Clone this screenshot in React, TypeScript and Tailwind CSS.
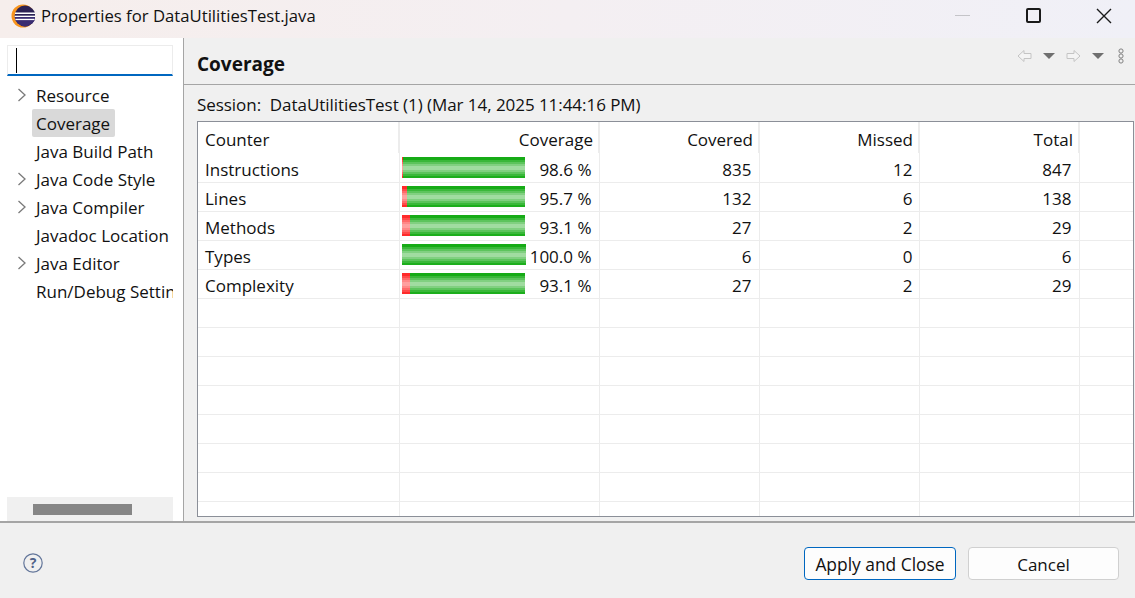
const rows = [
  { name: "Instructions", pct: "98.6 %", red: 1, covered: "835", missed: "12", total: "847" },
  { name: "Lines", pct: "95.7 %", red: 5, covered: "132", missed: "6", total: "138" },
  { name: "Methods", pct: "93.1 %", red: 8, covered: "27", missed: "2", total: "29" },
  { name: "Types", pct: "100.0 %", red: 0, covered: "6", missed: "0", total: "6" },
  { name: "Complexity", pct: "93.1 %", red: 8, covered: "27", missed: "2", total: "29" },
];

const tree = [
  { label: "Resource", arrow: true },
  { label: "Coverage", arrow: false, selected: true },
  { label: "Java Build Path", arrow: false },
  { label: "Java Code Style", arrow: true },
  { label: "Java Compiler", arrow: true },
  { label: "Javadoc Location", arrow: false },
  { label: "Java Editor", arrow: true },
  { label: "Run/Debug Settings", arrow: false },
];

function EclipseLogo() {
  return (
    <svg width="24" height="24" viewBox="0 0 24 24" className="shrink-0">
      <circle cx="12" cy="12" r="11.5" fill="#f7941e" />
      <circle cx="14" cy="12" r="10.4" fill="#2c2255" />
      <path d="M3.6 12 A10.4 10.4 0 0 0 24.4 12 Z" fill="#3a2d72" />
      <rect x="4" y="8.5" width="20" height="1.5" fill="#fff" />
      <rect x="3.6" y="11.7" width="20.8" height="1.3" fill="#fff" />
      <rect x="4.4" y="14.8" width="19.2" height="1.3" fill="#fff" />
    </svg>
  );
}

function NavArrow({ flip }: { flip?: boolean }) {
  return (
    <svg width="15" height="14" viewBox="0 0 15 14" className={flip ? "-scale-x-100" : ""}>
      <path d="M1 7 L7 1.5 V4.5 H14 V9.5 H7 V12.5 Z" fill="#f4f4f4" stroke="#c4c4c4" strokeWidth="1" />
    </svg>
  );
}

function Caret() {
  return <div className="w-0 h-0 border-x-[6px] border-x-transparent border-t-[6px] border-t-[#6f6f6f]" />;
}

function TreeArrow() {
  return (
    <svg width="10" height="14" viewBox="0 0 10 14">
      <path d="M1.5 1 L8 7 L1.5 13" fill="none" stroke="#7a7a7a" strokeWidth="1.3" />
    </svg>
  );
}

function Bar({ red, full }: { red: number; full: boolean }) {
  return (
    <div className={`flex h-[21px] ${full ? "w-[124px]" : "w-[123px]"}`}>
      {red > 0 && (
        <div
          className="h-full bg-[linear-gradient(#ff2a2a_0%,#ff2a2a_14%,#ff4a4a_14%,#ff4a4a_24%,#ff6a6a_24%,#ff6a6a_34%,#ff8888_34%,#ff8888_44%,#ffa0a0_44%,#ffa0a0_62%,#ff8888_62%,#ff8888_72%,#ff6a6a_72%,#ff6a6a_82%,#ff4a4a_82%,#ff4a4a_90%,#ff2a2a_90%)]"
          style={{ width: red }}
        />
      )}
      <div className="h-full flex-1 bg-[linear-gradient(#16ab16_0%,#16ab16_14%,#3ab83a_14%,#3ab83a_24%,#5cc45c_24%,#5cc45c_34%,#80d080_34%,#80d080_44%,#a0dca0_44%,#a0dca0_62%,#80d080_62%,#80d080_72%,#5cc45c_72%,#5cc45c_82%,#3ab83a_82%,#3ab83a_90%,#1cae1c_90%)]" />
    </div>
  );
}

export default function App() {
  return (
    <div className="w-[1135px] h-[598px] flex flex-col overflow-hidden bg-[#f0f0f0] text-[17px] text-[#111] font-['Open_Sans','Noto_Sans',sans-serif]">
      <div className="h-[38px] shrink-0 flex items-center pl-[11px] pb-[7px] bg-[linear-gradient(90deg,#f6eeec,#f4eff2_50%,#f0f0f7)]">
        <EclipseLogo />
        <span className="ml-[6px] text-[16.7px]">Properties for DataUtilitiesTest.java</span>
        <div className="ml-auto flex items-center">
          <div className="w-[15px] h-px bg-[#c4c4c8] mr-[56px]" />
          <div className="w-[15px] h-[15px] border-2 border-[#1a1a1a] rounded-[2px] mr-[55px]" />
          <svg width="16" height="16" viewBox="0 0 16 16" className="mr-[23px]">
            <path d="M1 1 L15 15 M15 1 L1 15" stroke="#1a1a1a" strokeWidth="1.4" />
          </svg>
        </div>
      </div>

      <div className="h-[485px] shrink-0 flex border-b-2 border-[#a5a5a5]">
        <div className="w-[183px] shrink-0 bg-white flex flex-col pt-[7px] pl-[7px] pr-[10px] overflow-hidden">
          <div className="h-[31px] shrink-0 border border-[#ececec] border-b-2 border-b-[#0067c0] flex items-center pl-2">
            <div className="w-px h-[25px] bg-black" />
          </div>
          <div className="mt-[5px] flex flex-col overflow-hidden">
            {tree.map((item) => (
              <div key={item.label} className="h-[28px] flex items-center whitespace-nowrap overflow-hidden">
                <div className="w-[25px] shrink-0 flex items-center pl-[10px]">
                  {item.arrow && <TreeArrow />}
                </div>
                <span className={`pl-[4px] pr-[5px] h-[28px] leading-[30px] rounded-[2px] ${item.selected ? "bg-[#d9d9d9]" : ""}`}>
                  {item.label}
                </span>
              </div>
            ))}
          </div>
          <div className="mt-auto h-[24px] shrink-0 bg-[#f0f0f0] flex items-center pl-[26px]">
            <div className="w-[99px] h-[11px] bg-[#868686]" />
          </div>
        </div>

        <div className="w-px bg-[#a5a5a5]" />

        <div className="flex-1 flex flex-col min-w-0">
          <div className="h-[47px] shrink-0 border-b border-[#a5a5a5] flex pl-[13px] pr-[11px]">
            <span className="font-bold text-[19px] leading-[52px]">Coverage</span>
            <div className="ml-auto flex items-center gap-[11px] h-[35px]">
              <NavArrow />
              <Caret />
              <NavArrow flip />
              <Caret />
              <svg width="6" height="16" viewBox="0 0 6 16" className="ml-[3px]">
                <circle cx="3" cy="3" r="2.1" fill="none" stroke="#808080" />
                <circle cx="3" cy="8" r="2.1" fill="none" stroke="#808080" />
                <circle cx="3" cy="13" r="2.1" fill="none" stroke="#808080" />
              </svg>
            </div>
          </div>

          <div className="h-[36px] shrink-0 pl-[13px] leading-[39px] tracking-[-0.05px] whitespace-nowrap">
            Session:&nbsp; DataUtilitiesTest (1) (Mar 14, 2025 11:44:16 PM)
          </div>

          <div className="ml-[13px] mr-px h-[396px] border border-[#8b8f98] bg-white overflow-hidden">
            <table className="table-fixed w-full border-collapse leading-[22px]">
              <colgroup>
                <col className="w-[201px]" />
                <col className="w-[200px]" />
                <col className="w-[160px]" />
                <col className="w-[160px]" />
                <col className="w-[160px]" />
                <col />
              </colgroup>
              <thead>
                <tr className="h-[31px]">
                  <th className="font-normal text-left pl-[7px] pt-[4px] border-r-2 border-[#ececec]">Counter</th>
                  <th className="font-normal text-right pr-[5px] pt-[4px] border-r-2 border-[#ececec]">Coverage</th>
                  <th className="font-normal text-right pr-[5px] pt-[4px] border-r-2 border-[#ececec]">Covered</th>
                  <th className="font-normal text-right pr-[5px] pt-[4px] border-r-2 border-[#ececec]">Missed</th>
                  <th className="font-normal text-right pr-[5px] pt-[4px] border-r-2 border-[#ececec]">Total</th>
                  <th />
                </tr>
              </thead>
              <tbody>
                {rows.map((r) => (
                  <tr key={r.name} className="h-[29px] border-b border-[#ececec]">
                    <td className="pl-[7px] pt-[5px] border-r border-[#ececec]">{r.name}</td>
                    <td className="pl-[2px] pr-[7px] border-r border-[#ececec]">
                      <div className="flex items-center justify-between h-[28px]">
                        <Bar red={r.red} full={r.red === 0} />
                        <span className="pt-[5px]">{r.pct}</span>
                      </div>
                    </td>
                    <td className="text-right pr-[7px] pt-[5px] border-r border-[#ececec]">{r.covered}</td>
                    <td className="text-right pr-[6px] pt-[5px] border-r border-[#ececec]">{r.missed}</td>
                    <td className="text-right pr-[7px] pt-[5px] border-r border-[#ececec]">{r.total}</td>
                    <td />
                  </tr>
                ))}
                {Array.from({ length: 8 }).map((_, i) => (
                  <tr key={i} className="h-[29px] border-b border-[#ececec]">
                    <td className="border-r border-[#ececec]" />
                    <td className="border-r border-[#ececec]" />
                    <td className="border-r border-[#ececec]" />
                    <td className="border-r border-[#ececec]" />
                    <td className="border-r border-[#ececec]" />
                    <td />
                  </tr>
                ))}
              </tbody>
            </table>
          </div>
        </div>
      </div>

      <div className="flex-1 flex items-center pl-[23px] pr-[16px] pt-[5px]">
        <svg width="20" height="20" viewBox="0 0 20 20">
          <circle cx="10" cy="10" r="9.2" fill="none" stroke="#63769a" strokeWidth="1.2" />
          <text x="10" y="15" textAnchor="middle" fontSize="14" fontWeight="700" fill="#4f6288">?</text>
        </svg>
        <button className="ml-auto w-[152px] h-[33px] bg-[#fdfdfd] border border-[#0067c0] rounded-[4px] text-center text-[17.4px] leading-[33px]">
          Apply and Close
        </button>
        <button className="ml-[12px] w-[151px] h-[33px] bg-[#fdfdfd] border border-[#d0d0d0] rounded-[4px] text-center leading-[33px]">
          Cancel
        </button>
      </div>
    </div>
  );
}
